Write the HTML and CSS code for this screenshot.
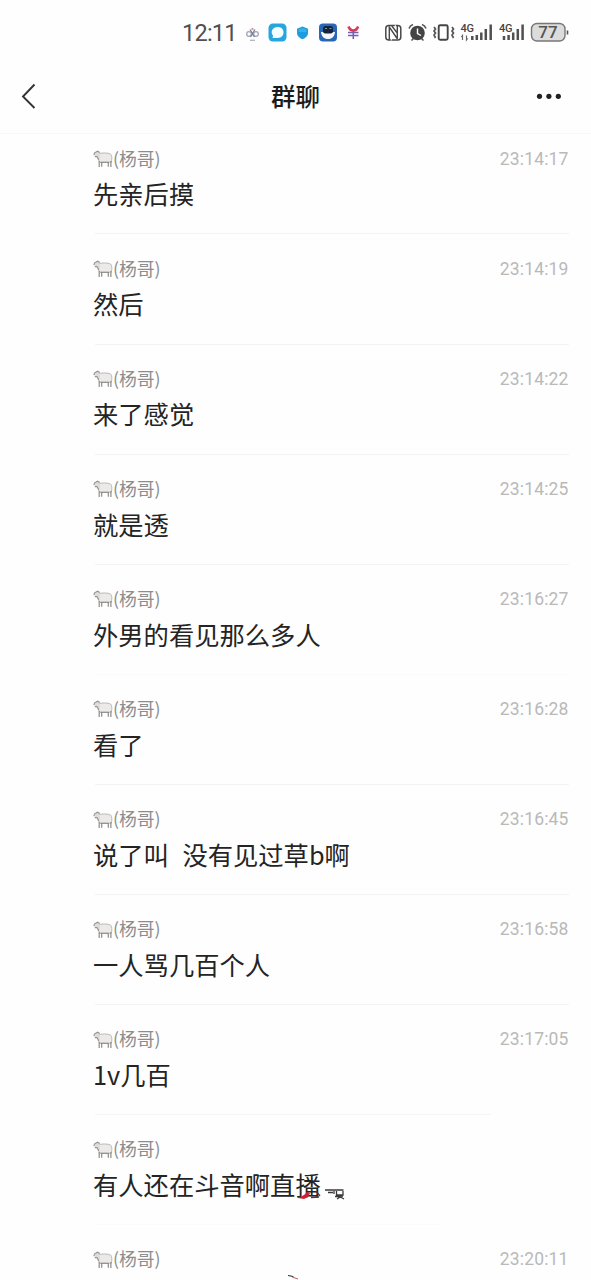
FILE: index.html
```html
<!DOCTYPE html>
<html lang="zh-CN">
<head>
<meta charset="utf-8">
<title>群聊</title>
<link rel="stylesheet" href="styles.css">
</head>
<body>
<svg class="defs" width="0" height="0">
  <symbol id="sheep" viewBox="0 0 20 18">
    <path d="M5.500 3.800C8 2.800 15 2.400 17.800 4.200c1.400 1.500 1.200 5 .6 8H6.500C5.300 9.500 5 6 5.500 3.800z" fill="#ebeae8" stroke="#b4b3b0" stroke-width=".9"/>
    <path d="M1 4.200 3.300 1.800 6.200 2 7 6 6.600 10 4.800 6.500 2.200 6.400z" fill="#dddcd9"/>
    <path d="M.8 5.100 1.600 2.800 4.600 1.200 6.800 2.400M1.800 6.600 4 6.500 5.700 10" fill="none" stroke="#949390" stroke-width="1.100"/>
    <path d="M6.200 11v6M8.700 12v4.800M15.300 12v4.800M17.900 11v6" stroke="#8d8c89" stroke-width="1.200"/>
    <path d="M7.500 12.300h8" stroke="#8a8986" stroke-width="1"/>
  </symbol>
</svg>
<div class="screen">
  <div class="status">
    <span class="clock">12:11</span>
    <svg class="status-icons" width="388" height="28" viewBox="203 19 388 28">
      <g fill="none" stroke="#a2a5b4" stroke-width="1.300">
        <circle cx="249" cy="34" r="2.300"/><circle cx="256" cy="34" r="2.300"/><path d="M250 29.500l2.500 4 2.500-4M250.500 37l2-3 2 3" stroke="#7d8397"/><path d="M250 40.300h5" stroke="#b4b4bd"/>
      </g>
      <circle cx="252.500" cy="29" r="1.200" fill="#d99aa8"/>
      <rect x="268.500" y="23.500" width="18" height="18" rx="4.500" fill="#27a5df"/>
      <path d="M277.500 27c4 0 6 2.200 6 5.300s-2 5.700-6 5.700h-5l.6-2.300c-3.300-4-.2-8.700 4.400-8.700z" fill="#f2feff"/>
      <path d="M302.500 26.500l5.500 2.200v4c0 3.300-2.500 5.200-5.500 6.600-3-1.400-5.500-3.300-5.500-6.600v-4z" fill="#1c9de0"/>
      <path d="M302.500 28l4 1.600v2.500h-8v-2.500z" fill="#37b1e6"/>
      <rect x="319" y="23.500" width="18" height="18" rx="4" fill="#2867b8"/>
      <path d="M321 32h14c-.5 4.500-3 7-7 7s-6.500-2.500-7-7z" fill="#f5f9fc"/>
      <rect x="323" y="26" width="10" height="7.500" rx="2.500" fill="#15233b"/>
      <path d="M325 28.500h2M329.500 28.500h2" stroke="#7d9ab0"/>
      <path d="M348.500 26.500q1.500 4 4.800 4t4.800-4" fill="none" stroke="#d23b59" stroke-width="2.600"/>
      <path d="M348 32.500h10.500M348 35.500h10.500M353.300 31v8" stroke="#7462ad" stroke-width="1.600"/>
      <rect x="385.800" y="25.500" width="15" height="14.500" rx="3" fill="#fefefe" stroke="#484848" stroke-width="1.500"/>
      <path d="M389.300 40V27l8.200 12M397.300 25v13.500M391.800 26l5.500 7" fill="none" stroke="#484848" stroke-width="1.400"/>
      <path d="M391.300 33v7.500M395.300 25v3" stroke="#fefefe" stroke-width="1"/>
      <circle cx="417.500" cy="33" r="7.300" fill="#444"/>
      <path d="M417.500 28.500v5l3.500 2" fill="none" stroke="#fff" stroke-width="1.400"/>
      <path d="M409 28.500q1-3 4-4M422 24.500q3 1 4 4M411.500 40.500l2-2M423.500 40.500l-2-2" fill="none" stroke="#555" stroke-width="1.600"/>
      <rect x="438.700" y="25.200" width="9" height="14.600" rx="1.500" fill="none" stroke="#444" stroke-width="1.900"/>
      <path d="M434 27l1.500 2-1.500 2 1.500 2-1.500 2 1.500 3M452 27l1.500 2-1.500 2 1.500 2-1.500 2 1.500 3" fill="none" stroke="#555" stroke-width="1.700"/>
      <text class="net" x="460.500" y="32">4G</text>
      <path d="M462.500 40v-4.500l-1.200 1.500M466.500 35.500V40l1.200-1.500" fill="none" stroke="#666" stroke-width="1.200"/>
      <path d="M472.300 40v-4M476.800 40v-5M481.300 40v-7.500M485.800 40V29M490.700 40V24.500" stroke="#505050" stroke-width="2.500"/>
      <text class="net" x="499" y="32">4G</text>
      <path d="M504 40v-4M508.600 40v-5M513.200 40v-7.500M517.800 40V29M522.600 40V24.500" stroke="#505050" stroke-width="2.500"/>
      <rect x="531.500" y="23.500" width="33.500" height="17.500" rx="5.500" fill="#dcdcdc" stroke="#777" stroke-width="1.400"/>
      <path d="M567.500 30.500v4" stroke="#555" stroke-width="1.600"/>
      <text class="battery" x="548" y="38" text-anchor="middle">77</text>
    </svg>
  </div>
  <header class="nav">
    <svg width="16" height="28" viewBox="0 0 16 28"><path d="M13.500 2.500 2 14.500 13.500 26" fill="none" stroke="#333" stroke-width="1.900"/></svg>
    <h1>群聊</h1>
    <svg width="30" height="8" viewBox="0 0 30 8"><circle cx="4.500" cy="4.300" r="2.600"/><circle cx="13.900" cy="4.300" r="2.600"/><circle cx="23.300" cy="4.300" r="2.600"/></svg>
  </header>
  <main class="list">
    <article class="row"><div class="meta"><svg class="sheep"><use href="#sheep"/></svg><span class="name">(杨哥)</span><time>23:14:17</time></div><p>先亲后摸</p></article>
    <article class="row"><div class="meta"><svg class="sheep"><use href="#sheep"/></svg><span class="name">(杨哥)</span><time>23:14:19</time></div><p>然后</p></article>
    <article class="row"><div class="meta"><svg class="sheep"><use href="#sheep"/></svg><span class="name">(杨哥)</span><time>23:14:22</time></div><p>来了感觉</p></article>
    <article class="row"><div class="meta"><svg class="sheep"><use href="#sheep"/></svg><span class="name">(杨哥)</span><time>23:14:25</time></div><p>就是透</p></article>
    <article class="row pale"><div class="meta"><svg class="sheep"><use href="#sheep"/></svg><span class="name">(杨哥)</span><time>23:16:27</time></div><p>外男的看见那么多人</p></article>
    <article class="row"><div class="meta"><svg class="sheep"><use href="#sheep"/></svg><span class="name">(杨哥)</span><time>23:16:28</time></div><p>看了</p></article>
    <article class="row"><div class="meta"><svg class="sheep"><use href="#sheep"/></svg><span class="name">(杨哥)</span><time>23:16:45</time></div><p class="spaced">说了叫  没有见过草b啊</p></article>
    <article class="row"><div class="meta"><svg class="sheep"><use href="#sheep"/></svg><span class="name">(杨哥)</span><time>23:16:58</time></div><p>一人骂几百个人</p></article>
    <article class="row short"><div class="meta"><svg class="sheep"><use href="#sheep"/></svg><span class="name">(杨哥)</span><time>23:17:05</time></div><p>1v几百</p></article>
    <article class="row faint"><div class="meta"><svg class="sheep"><use href="#sheep"/></svg><span class="name">(杨哥)</span></div><p>有人还在斗音啊直播<svg class="scrap" width="50" height="16" viewBox="297 1184 50 16"><path d="M298 1198l6-3 3-3 3 1-2 4-4 2z" fill="#cf1f35"/><path d="M311 1197.500l8-.5M316 1191l4 5" stroke="#553338" stroke-width="1.300"/><path d="M325 1190h18.500M328 1192.500h5M334 1191v3M336.500 1191v4h6.500v-4M335 1196.500l8-.5M337 1195l7 4M343 1195l-6 4" fill="none" stroke="#3a3939" stroke-width="1.300"/></svg></p></article>
    <article class="row"><div class="meta"><svg class="sheep"><use href="#sheep"/></svg><span class="name">(杨哥)</span><time>23:20:11</time></div></article>
  </main>
  <svg class="fleck" width="14" height="6" viewBox="0 0 14 6"><path d="M1 1.500l4 .8 2 1.400" fill="none" stroke="#333" stroke-width="1.100"/><path d="M6 3.300l5 1.700" stroke="#b66" stroke-width="1"/></svg>
</div>
</body>
</html>
```
FILE: styles.css
```css
* { box-sizing: border-box; }
body { margin: 0; background: #fefefe; font-family: "Noto Sans CJK SC", sans-serif; }
.defs { position: absolute; }
.screen { position: relative; width: 591px; height: 1280px; overflow: hidden; display: flex; flex-direction: column; }
.status { height: 60px; flex: none; display: flex; padding-top: 19px; }
.clock { width: 203px; padding-left: 182px; white-space: nowrap; font: 23.5px/28px Roboto, sans-serif; letter-spacing: -.75px; color: #505050; }
.status-icons { flex: none; overflow: visible; }
.net { font: 500 11px Roboto, sans-serif; fill: #444; letter-spacing: -.2px; }
.battery { font: 500 17px Roboto, sans-serif; fill: #555; }
.nav { height: 74px; flex: none; display: flex; align-items: center; justify-content: space-between; padding: 0 26px 1px 21px; border-bottom: 1px solid #f8f8f8; fill: #222; }
.nav h1 { margin: 0 0 0 19px; font-size: 24.5px; line-height: 36px; font-weight: 500; color: #1c1c1c; }
.list { margin-top: -10px; flex: none; }
.row { position: relative; height: 110.1px; margin: 0 22px 0 93px; padding-top: 21px; }
.row::after { content: ""; position: absolute; left: 2px; right: 0; bottom: -.4px; height: 1px; background: #f3f3f3; }
.row.pale::after { background: #fafafa; }
.row.short::after { right: 78px; background: #f5f5f8; }
.row.faint::after { right: 128px; background: #fafafc; }
.meta { display: flex; align-items: center; height: 26px; }
.sheep { width: 20px; height: 18px; flex: none; margin-top: 2px; }
.name { flex: 1; font-size: 17.8px; line-height: 26px; margin-top: -1px; color: #8d8d8d; }
time { font: 17.5px/26px Roboto, sans-serif; letter-spacing: .15px; color: #b9b9b9; padding-right: .5px; padding-top: 1px; }
.row p { margin: 4.3px 0 0; font-size: 25.3px; line-height: 36px; color: #242424; white-space: pre; }
.row p.spaced { word-spacing: 1.1px; }
.scrap { position: absolute; left: 204px; top: 69px; }
.fleck { position: absolute; left: 287px; top: 1274px; }
```
